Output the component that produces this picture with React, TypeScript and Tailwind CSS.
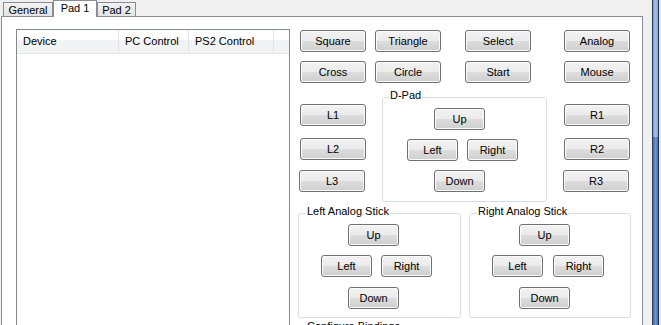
import React from "react";

function Btn({ label, className = "" }: { label: string; className?: string }) {
  return (
    <div
      className={
        "h-[22px] shrink-0 rounded-[3px] border border-[#707070] bg-[linear-gradient(to_bottom,#f2f2f2_0%,#ebebeb_50%,#dddddd_50%,#cfcfcf_100%)] shadow-[inset_0_0_0_1px_#fbfbfb] flex items-center justify-center text-black " +
        className
      }
    >
      {label}
    </div>
  );
}

function Group({
  title,
  className = "",
  labelClass = "",
  children,
}: {
  title: string;
  className?: string;
  labelClass?: string;
  children: React.ReactNode;
}) {
  return (
    <div className={"relative shrink-0 rounded-[3px] border border-[#d5dfe5] " + className}>
      <div className={"absolute -top-[9px] px-[1px] bg-white leading-[13px] text-black " + labelClass}>{title}</div>
      {children}
    </div>
  );
}

function Stick({ upMl, leftMl, rightMl, downMt }: { upMl: string; leftMl: string; rightMl: string; downMt: string }) {
  return (
    <div className="flex flex-col pt-[10px]">
      <Btn label="Up" className={"w-[51px] " + upMl} />
      <div className="flex mt-[9px]">
        <Btn label="Left" className={"w-[51px] " + leftMl} />
        <Btn label="Right" className={"w-[51px] " + rightMl} />
      </div>
      <Btn label="Down" className={"w-[51px] " + upMl + " " + downMt} />
    </div>
  );
}

export default function App() {
  return (
    <div className="flex w-[661px] h-[325px] overflow-hidden bg-[#f0f0f0] font-['Liberation_Sans',Arial,sans-serif] text-[11px] leading-[13px] text-black">
      <div className="flex flex-col w-[652px] shrink-0">
        {/* tabs */}
        <div className="flex items-end h-[16px] pl-[3px] relative z-10">
          <div className="w-[50px] h-[14px] border border-b-0 border-[#898c95] bg-[linear-gradient(to_bottom,#f3f3f3,#e3e3e3)] flex items-center justify-center pt-[1px]">
            General
          </div>
          <div className="w-[44px] h-[17px] -mb-[1px] border border-b-0 border-[#898c95] bg-white flex items-start justify-center pt-[1px]">
            Pad 1
          </div>
          <div className="w-[39px] h-[14px] border border-b-0 border-[#898c95] bg-[linear-gradient(to_bottom,#f3f3f3,#e3e3e3)] flex items-center justify-center pt-[1px]">
            Pad 2
          </div>
        </div>
        {/* panel */}
        <div className="ml-[1px] w-[642px] flex-1 border border-b-0 border-[#898c95] bg-white flex pt-[12px] pl-[14px]">
          {/* list view */}
          <div className="w-[274px] h-[400px] shrink-0 border border-[#828790] bg-white flex flex-col">
            <div className="h-[24px] flex border-b border-[#e4e6ea] bg-[linear-gradient(to_bottom,#ffffff_0%,#ffffff_45%,#f2f3f5_45%,#f2f3f5_100%)]">
              <div className="w-[101px] pl-[6px] flex items-center">Device</div>
              <div className="w-[1px] bg-[#e1e3e6]" />
              <div className="w-[69px] pl-[6px] flex items-center">PC Control</div>
              <div className="w-[1px] bg-[#e1e3e6]" />
              <div className="w-[84px] pl-[6px] flex items-center">PS2 Control</div>
              <div className="w-[1px] bg-[#e1e3e6]" />
              <div className="flex-1" />
            </div>
          </div>
          {/* controls */}
          <div className="ml-[8px] mt-[1px] w-[334px] shrink-0 flex flex-col">
            <div className="flex pl-[2px]">
              <Btn label="Square" className="w-[66px]" />
              <Btn label="Triangle" className="w-[66px] ml-[9px]" />
              <Btn label="Select" className="w-[66px] ml-[24px]" />
              <Btn label="Analog" className="w-[66px] ml-[33px]" />
            </div>
            <div className="flex pl-[2px] mt-[9px]">
              <Btn label="Cross" className="w-[66px]" />
              <Btn label="Circle" className="w-[66px] ml-[9px]" />
              <Btn label="Start" className="w-[66px] ml-[24px]" />
              <Btn label="Mouse" className="w-[66px] ml-[33px]" />
            </div>
            <div className="flex items-start mt-[14px]">
              <div className="flex flex-col pl-[2px] pt-[7px]">
                <Btn label="L1" className="w-[66px]" />
                <Btn label="L2" className="w-[66px] mt-[12px]" />
                <Btn label="L3" className="w-[66px] mt-[10px] -ml-[1px]" />
              </div>
              <Group title="D-Pad" className="ml-[16px] w-[165px] h-[105px]" labelClass="left-[6px]">
                <Stick upMl="ml-[51px]" leftMl="ml-[24px]" rightMl="ml-[9px]" downMt="mt-[9px]" />
              </Group>
              <div className="flex flex-col ml-[17px] pt-[7px]">
                <Btn label="R1" className="w-[66px]" />
                <Btn label="R2" className="w-[66px] mt-[12px]" />
                <Btn label="R3" className="w-[66px] mt-[10px] -ml-[1px]" />
              </div>
            </div>
            <div className="flex mt-[11px]">
              <Group title="Left Analog Stick" className="w-[163px] h-[105px]" labelClass="left-[7px]">
                <Stick upMl="ml-[49px]" leftMl="ml-[22px]" rightMl="ml-[9px]" downMt="mt-[10px]" />
              </Group>
              <Group title="Right Analog Stick" className="ml-[8px] w-[162px] h-[105px]" labelClass="left-[7px]">
                <Stick upMl="ml-[49px]" leftMl="ml-[22px]" rightMl="ml-[10px]" downMt="mt-[10px]" />
              </Group>
            </div>
            <div className="pl-[9px] mt-[2px] leading-[13px]">Configure Bindings</div>
          </div>
        </div>
      </div>
      {/* right edge strip */}
      <div className="flex w-[9px] shrink-0">
        <div className="w-[1px] bg-[#2c3d5a]" />
        <div className="w-[5px] flex flex-col">
          <div className="h-[137px] bg-[linear-gradient(to_right,#7f9bc9,#a9bfe3,#8ba6d2)]" />
          <div className="flex-1 bg-[linear-gradient(to_right,#3e66a9,#6e93cd,#4670b3)]" />
        </div>
        <div className="w-[1px] bg-[#1f2d48]" />
        <div className="w-[2px] bg-[#e3e7ee]" />
      </div>
    </div>
  );
}
